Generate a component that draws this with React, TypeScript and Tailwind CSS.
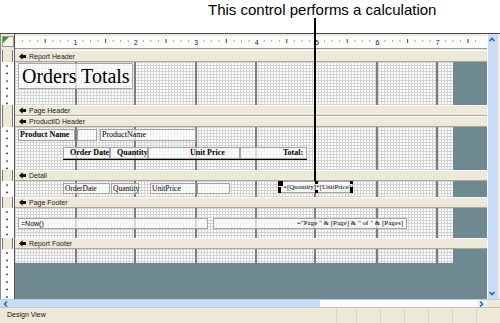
const cols = ['w-[62px]', 'w-[59px]', 'w-[61px]', 'w-[60px]', 'w-[59px]', 'w-[62px]', 'w-[60px]']

const serif = "font-['Liberation_Serif','Times_New_Roman',serif]"
const ctl = 'absolute border border-[#a4a4a4] bg-white/70 text-black leading-none flex items-center whitespace-nowrap'

function SectionIcon() {
  return (
    <svg width="7" height="7" viewBox="0 0 7 7" className="shrink-0">
      <path d="M0 3.5 L3.6 0.2 V2 H7 V5 H3.6 V6.8 Z" fill="#111" />
    </svg>
  )
}

function Bar({ label, h = 'h-[11px]' }: { label: string; h?: string }) {
  return (
    <div className={`flex ${h}`}>
      <div className="w-[14px] border-r border-[#555] bg-white px-[1px]">
        <div className="h-full border-x border-[#777] bg-[#ece9d8]" />
      </div>
      <div className="flex flex-1 items-center gap-[3px] border-t border-t-white border-b border-b-[#aca899] bg-[#ece9d8] pl-[4px] text-[7px] leading-none text-[#1a1a1a]">
        <SectionIcon />
        {label}
      </div>
    </div>
  )
}

function Grid({ h, children }: { h: string; children?: React.ReactNode }) {
  return (
    <div className={`flex ${h}`}>
      <div className="w-[14px] border-r border-[#555] bg-white bg-[radial-gradient(circle_at_6px_4px,#333_0.7px,transparent_1px)] bg-[length:14px_7.5px]" />
      <div className="relative flex w-[438px] bg-white bg-[linear-gradient(90deg,#d4d4d4_1px,transparent_1px),linear-gradient(#d4d4d4_1px,transparent_1px)] bg-[length:3px_3px]">
        {cols.map((c, i) => (
          <div key={i} className={`${c} h-full border-r-2 border-[#7c7c7c]`} />
        ))}
        <div className="w-[15px]" />
        {children}
      </div>
      <div className="flex-1 bg-[#6e8a90]" />
    </div>
  )
}

function Ruler() {
  const marks = []
  for (let i = 1; i < 62; i++) {
    const x = (i * 60.4) / 8
    if (i % 8 === 0) continue
    marks.push(
      i % 4 === 0 ? (
        <rect key={i} x={x - 0.5} y={5} width={1} height={4} fill="#444" />
      ) : (
        <rect key={i} x={x - 0.5} y={6.5} width={1} height={1} fill="#555" />
      ),
    )
  }
  return (
    <svg width="472" height="16" className="block">
      <rect x="0" y="2" width="472" height="12" fill="#fbfbfb" />
      <rect x="0" y="14" width="472" height="1" fill="#9a9a9a" />
      {marks}
      {[1, 2, 3, 4, 5, 6, 7].map(n => (
        <text key={n} x={n * 60.4} y={10.5} fontSize="7" textAnchor="middle" fill="#222" fontFamily="Liberation Sans, Arial, sans-serif">
          {n}
        </text>
      ))}
    </svg>
  )
}

function Chevron({ dir }: { dir: 'up' | 'down' | 'left' | 'right' }) {
  const d = {
    up: 'M1.5 5 L4 2.5 L6.5 5',
    down: 'M1.5 3 L4 5.5 L6.5 3',
    left: 'M5 1.5 L2.5 4 L5 6.5',
    right: 'M3 1.5 L5.5 4 L3 6.5',
  }[dir]
  return (
    <svg width="8" height="8" viewBox="0 0 8 8">
      <path d={d} fill="none" stroke="#2f63b8" strokeWidth="1.6" />
    </svg>
  )
}

function Handle({ pos }: { pos: string }) {
  return <div className={`absolute bg-black ${pos}`} />
}

export default function App() {
  return (
    <div className="relative h-[323px] w-[500px] overflow-hidden bg-white font-['Liberation_Sans',Arial,sans-serif]">
      <div className="h-[33px] pl-[208px] pt-[1px] text-[15px] leading-[18px] text-black">This control performs a calculation</div>

      <div className="flex h-[290px] flex-col border-t border-[#4a4a4a]">
        <div className="flex h-[265px]">
          <div className="flex w-[487px] flex-col border-l border-[#8a8a8a]">
            {/* ruler row */}
            <div className="flex h-[16px] bg-[#ece9d8]">
              <div className="w-[14px] border-r border-[#555] px-[1px] pt-[2px]">
                <svg width="12" height="11" className="block">
                  <rect x="0.5" y="0.5" width="11" height="10" fill="#f4f3ee" stroke="#9a988c" />
                  <path d="M1 1 H7 L1 7 Z" fill="#2aa02a" />
                </svg>
              </div>
              <Ruler />
            </div>

            <Bar label="Report Header" h="h-[12px]" />
            <Grid h="h-[43px]">
              <div className={`${ctl} ${serif} left-[3px] top-[1px] h-[26px] w-[115px] bg-[#f6f6f6] pl-[3px] text-[20px]`}>Orders Totals</div>
            </Grid>

            <Bar label="Page Header" />
            <Bar label="ProductID Header" />
            <Grid h="h-[43px]">
              <div className={`${ctl} ${serif} left-[3px] top-[2px] h-[12px] w-[57px] pl-[1px] text-[8px] font-bold`}>Product Name</div>
              <div className={`${ctl} left-[62px] top-[2px] h-[12px] w-[20px]`} />
              <div className={`${ctl} ${serif} left-[85px] top-[2px] h-[12px] w-[96px] pl-[1px] text-[8px]`}>ProductName</div>
              <div className={`${ctl} ${serif} left-[48px] top-[20px] h-[12px] w-[47px] pl-[6px] text-[8px] font-bold`}>Order Date</div>
              <div className={`${ctl} ${serif} left-[95px] top-[20px] h-[12px] w-[38px] pl-[6px] text-[8px] font-bold`}>Quantity</div>
              <div className={`${ctl} ${serif} left-[133px] top-[20px] h-[12px] w-[92px] pl-[41px] text-[8px] font-bold`}>Unit Price</div>
              <div className={`${ctl} ${serif} left-[225px] top-[20px] h-[12px] w-[67px] pl-[42px] text-[8px] font-bold`}>Total:</div>
              <div className="absolute left-[48px] top-[32px] h-[1px] w-[244px] bg-black" />
            </Grid>

            <Bar label="Detail" />
            <Grid h="h-[16px]">
              <div className={`${ctl} ${serif} left-[48px] top-[2px] h-[11px] w-[47px] pl-[1px] text-[7.5px]`}>OrderDate</div>
              <div className={`${ctl} ${serif} left-[96px] top-[2px] h-[11px] w-[28px] pl-[1px] text-[7.5px]`}>Quantity</div>
              <div className={`${ctl} ${serif} left-[135px] top-[2px] h-[11px] w-[46px] pl-[1px] text-[7.5px]`}>UnitPrice</div>
              <div className={`${ctl} left-[182px] top-[2px] h-[11px] w-[33px]`} />
              <div className={`${ctl} ${serif} left-[263px] top-[0px] h-[12px] w-[75px] border-[#555] pl-[4px] text-[7px]`}>
                =[Quantity]*[UnitPrice]
                <Handle pos="-left-[1px] -top-[1px] h-[5px] w-[5px]" />
                <Handle pos="left-[36px] -top-[1px] h-[3px] w-[3px]" />
                <Handle pos="-right-[1px] -top-[1px] h-[3px] w-[3px]" />
                <Handle pos="-left-[1px] top-[5px] h-[3px] w-[3px]" />
                <Handle pos="-right-[1px] top-[5px] h-[3px] w-[3px]" />
                <Handle pos="-left-[1px] -bottom-[1px] h-[3px] w-[3px]" />
                <Handle pos="left-[36px] -bottom-[1px] h-[3px] w-[3px]" />
                <Handle pos="-right-[1px] -bottom-[1px] h-[3px] w-[3px]" />
              </div>
            </Grid>

            <Bar label="Page Footer" />
            <Grid h="h-[30px]">
              <div className={`${ctl} left-[3px] top-[10px] h-[11px] w-[190px] pl-[2px] text-[7px]`}>=Now()</div>
              <div className={`${ctl} ${serif} left-[198px] top-[10px] h-[11px] w-[194px] justify-end pr-[3px] text-[7px]`}>="Page " &amp; [Page] &amp; " of " &amp; [Pages]</div>
            </Grid>

            <Bar label="Report Footer" />
            <Grid h="h-[14px]" />

            <div className="flex flex-1">
              <div className="w-[14px] border-r border-[#555] bg-white bg-[radial-gradient(circle_at_6px_4px,#333_0.7px,transparent_1px)] bg-[length:14px_7.5px]" />
              <div className="flex-1 bg-[#6e8a90]" />
            </div>
          </div>

          {/* vertical scrollbar */}
          <div className="flex w-[10px] flex-col justify-between border-l border-white bg-[#c6dcf7] py-[2px]">
            <Chevron dir="up" />
            <Chevron dir="down" />
          </div>
          <div className="w-[3px] border-l border-[#d6d6d6] bg-[#eeeeee]" />
        </div>

        {/* horizontal scrollbar */}
        <div className="flex h-[8px] border-t border-[#b9cde6]">
          <div className="flex w-[320px] items-center bg-[#c6dcf7] pl-[2px]">
            <Chevron dir="left" />
          </div>
          <div className="flex-1 bg-[#fbfcfe]" />
          <div className="flex w-[10px] items-center bg-[#eef3fb]">
            <Chevron dir="right" />
          </div>
          <div className="w-[13px] bg-[#ece9d8]" />
        </div>

        {/* status bar */}
        <div className="flex h-[16px] items-center border-t border-[#c8c5b8] bg-[#ece9d8] text-[7px] text-[#111]">
          <div className="flex-1 pl-[7px]">Design View</div>
          {['w-[20px]', 'w-[24px]', 'w-[24px]', 'w-[24px]', 'w-[24px]', 'w-[24px]', 'w-[24px]'].map((w, i) => (
            <div key={i} className={`${w} h-full border-l border-[#d9d6ca]`} />
          ))}
        </div>
      </div>

      {/* callout leader line */}
      <div className="absolute left-[314px] top-[18px] h-[163px] w-[2px] bg-black" />
    </div>
  )
}
